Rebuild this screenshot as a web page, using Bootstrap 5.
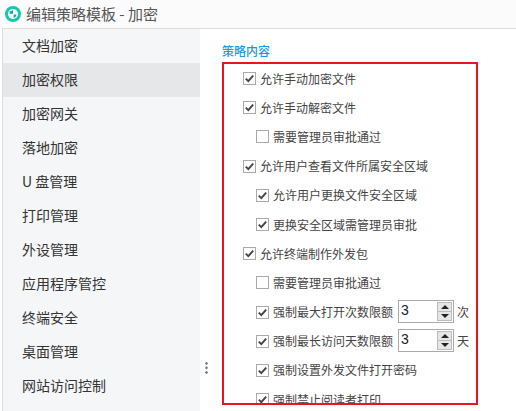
<!DOCTYPE html>
<html lang="zh">
<head>
<meta charset="utf-8">
<title>编辑策略模板 - 加密</title>
<link rel="stylesheet" href="https://cdn.jsdelivr.net/npm/bootstrap@5.3.0/dist/css/bootstrap.min.css">
<style>
html,body{height:411px;overflow:hidden;background:#fff;}
body{font-family:"Noto Sans CJK SC","Liberation Sans",sans-serif;color:#444;}
.title-strip{height:28px;background:#fbfbfb;padding-left:5px;gap:5px;font-size:15px;color:#555;}
.app-logo{width:16px;height:16px;display:block;}
.main-area{height:383px;border-top:1px solid #dcdcdc;border-left:1px solid #dcdcdc;margin-left:2px;}
.side-menu{width:197px;background:#f5f6f8;flex:none;position:relative;}
.side-item{height:34px;line-height:33px;padding-left:19px;font-size:14px;color:#333;}
.side-item.is-on{background:#e6e7e9;}
.grip{position:absolute;right:-8px;top:332px;width:3px;height:14px;background:radial-gradient(circle,#777 1.2px,transparent 1.4px) 0 0/3px 4.6px repeat-y;}
.content-pane{padding:13px 0 0 22px;min-width:0;flex:1;}
.pane-head{font-size:12px;line-height:18px;font-weight:500;color:#1a9be0;height:19px;}
.red-frame{width:256px;height:343px;border:2px solid #ea1320;overflow:hidden;padding:0 0 0 19px;margin-top:1px;}
.opt-row{height:29.2px;font-size:12px;color:#444;gap:4px;white-space:nowrap;}
.opt-row.sub{padding-left:13px;}
.form-check-input.tick{width:13px;height:13px;margin:0;border:1px solid #aaa;border-radius:0;background-color:#fff;flex:none;box-shadow:none;}
.form-check-input.tick:checked{background-color:#fff;border-color:#aaa;background-size:11px 11px;background-image:url("data:image/svg+xml,%3Csvg xmlns='http://www.w3.org/2000/svg' viewBox='0 0 11 11'%3E%3Cpath d='M1.8 5.6 4.3 8.2 9.2 2.6' fill='none' stroke='%23444' stroke-width='1.9'/%3E%3C/svg%3E");}
.opt-label{margin:0;line-height:14px;}
.spin-wrap{width:56px;height:23px;border:1px solid #aaa;margin:0 -1px 2px 1px;padding:0 1px 0 2px;background:#fff;}
.spin-num{flex:1;width:30px;min-width:0;border:0;outline:0;padding:0;height:19px;line-height:18px;font-size:14px;font-family:"Liberation Sans",sans-serif;color:#123;background:transparent;}
.spin-btns{width:15px;flex:none;border:1px solid #bbb;background:#bbb;gap:1px;height:19px;margin-top:1px;}
.spin-btn{flex:1;background:#e6e6e6;position:relative;}
.spin-btn::after{content:"";position:absolute;left:3px;border-left:4px solid transparent;border-right:4px solid transparent;}
.spin-btn.up::after{top:2px;border-bottom:4px solid #222;}
.spin-btn.down::after{top:2px;border-top:4px solid #222;}
</style>
</head>
<body>
<div class="title-strip d-flex align-items-center">
  <svg class="app-logo" viewBox="0 0 16 16"><circle cx="8" cy="8" r="8" fill="#14c9ae"/><circle cx="8" cy="8" r="5" fill="#fff"/><path d="M4.500 5.600 8 4.200v3.600H4.600Q4.400 6.600 4.500 5.600ZM8.700 8.600h3q-.6 2.500-3 3.400Z" fill="#14a8a0"/></svg>
  <span>编辑策略模板 - 加密</span>
</div>
<div class="main-area d-flex">
  <nav class="side-menu">
    <div class="side-item">文档加密</div>
    <div class="side-item is-on">加密权限</div>
    <div class="side-item">加密网关</div>
    <div class="side-item">落地加密</div>
    <div class="side-item">U 盘管理</div>
    <div class="side-item">打印管理</div>
    <div class="side-item">外设管理</div>
    <div class="side-item">应用程序管控</div>
    <div class="side-item">终端安全</div>
    <div class="side-item">桌面管理</div>
    <div class="side-item">网站访问控制</div>
    <div class="grip"></div>
  </nav>
  <section class="content-pane">
    <div class="pane-head">策略内容</div>
    <div class="red-frame">
      <div class="opt-row d-flex align-items-center"><input class="form-check-input tick" type="checkbox" checked id="c1"><label class="opt-label" for="c1">允许手动加密文件</label></div>
      <div class="opt-row d-flex align-items-center"><input class="form-check-input tick" type="checkbox" checked id="c2"><label class="opt-label" for="c2">允许手动解密文件</label></div>
      <div class="opt-row sub d-flex align-items-center"><input class="form-check-input tick" type="checkbox" id="c3"><label class="opt-label" for="c3">需要管理员审批通过</label></div>
      <div class="opt-row d-flex align-items-center"><input class="form-check-input tick" type="checkbox" checked id="c4"><label class="opt-label" for="c4">允许用户查看文件所属安全区域</label></div>
      <div class="opt-row sub d-flex align-items-center"><input class="form-check-input tick" type="checkbox" checked id="c5"><label class="opt-label" for="c5">允许用户更换文件安全区域</label></div>
      <div class="opt-row sub d-flex align-items-center"><input class="form-check-input tick" type="checkbox" checked id="c6"><label class="opt-label" for="c6">更换安全区域需管理员审批</label></div>
      <div class="opt-row d-flex align-items-center"><input class="form-check-input tick" type="checkbox" checked id="c7"><label class="opt-label" for="c7">允许终端制作外发包</label></div>
      <div class="opt-row sub d-flex align-items-center"><input class="form-check-input tick" type="checkbox" id="c8"><label class="opt-label" for="c8">需要管理员审批通过</label></div>
      <div class="opt-row sub d-flex align-items-center"><input class="form-check-input tick" type="checkbox" checked id="c9"><label class="opt-label" for="c9">强制最大打开次数限额</label>
        <div class="spin-wrap d-flex"><input class="spin-num" type="text" value="3" aria-label="次数"><div class="spin-btns d-flex flex-column"><div class="spin-btn up"></div><div class="spin-btn down"></div></div></div><span>次</span></div>
      <div class="opt-row sub d-flex align-items-center"><input class="form-check-input tick" type="checkbox" checked id="c10"><label class="opt-label" for="c10">强制最长访问天数限额</label>
        <div class="spin-wrap d-flex"><input class="spin-num" type="text" value="3" aria-label="天数"><div class="spin-btns d-flex flex-column"><div class="spin-btn up"></div><div class="spin-btn down"></div></div></div><span>天</span></div>
      <div class="opt-row sub d-flex align-items-center"><input class="form-check-input tick" type="checkbox" checked id="c11"><label class="opt-label" for="c11">强制设置外发文件打开密码</label></div>
      <div class="opt-row sub d-flex align-items-center"><input class="form-check-input tick" type="checkbox" checked id="c12"><label class="opt-label" for="c12">强制禁止阅读者打印</label></div>
    </div>
  </section>
</div>
<script src="https://cdn.jsdelivr.net/npm/bootstrap@5.3.0/dist/js/bootstrap.bundle.min.js"></script>
</body>
</html>
